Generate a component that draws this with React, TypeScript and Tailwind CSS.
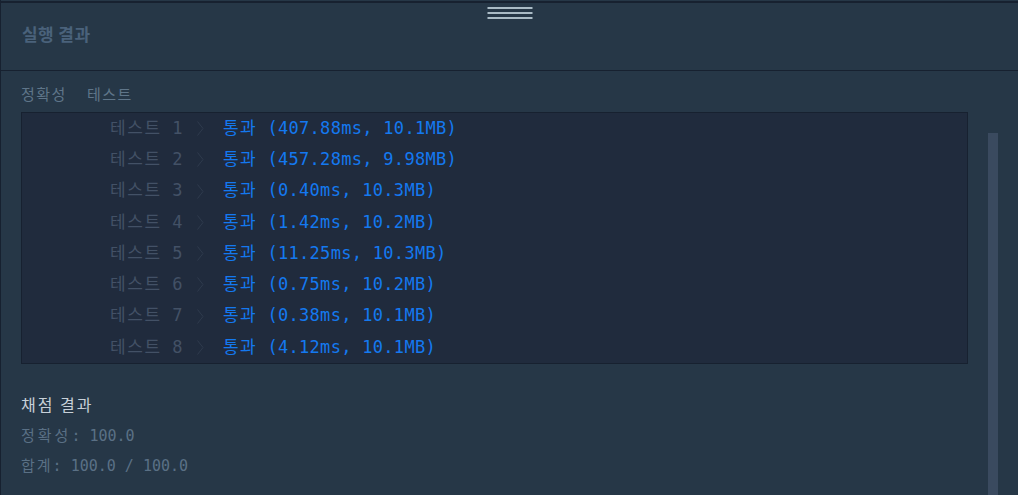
import React from "react"

const tests = [
  { n: 1, r: "(407.88ms, 10.1MB)" },
  { n: 2, r: "(457.28ms, 9.98MB)" },
  { n: 3, r: "(0.40ms, 10.3MB)" },
  { n: 4, r: "(1.42ms, 10.2MB)" },
  { n: 5, r: "(11.25ms, 10.3MB)" },
  { n: 6, r: "(0.75ms, 10.2MB)" },
  { n: 7, r: "(0.38ms, 10.1MB)" },
  { n: 8, r: "(4.12ms, 10.1MB)" },
]

const mono = "font-['DejaVu_Sans_Mono','Noto_Sans_CJK_KR',monospace]"
const sans = "font-['Noto_Sans_CJK_KR',sans-serif]"

export default function App() {
  return (
    <div className="flex h-[495px] w-[1018px] flex-col overflow-hidden border-l border-[#172130] bg-[#263747]">
      {/* top edge + grip */}
      <div className="h-px" />
      <div className="h-[2px] bg-[#172130]" />
      <div className="relative flex h-[67px] items-center px-[21px] pb-[5px]">
        <div className="absolute left-1/2 top-[4px] flex -translate-x-1/2 flex-col gap-[3px]">
          <div className="h-[2px] w-[45px] bg-[#aabbc6]" />
          <div className="h-[2px] w-[45px] bg-[#aabbc6]" />
          <div className="h-[2px] w-[45px] bg-[#aabbc6]" />
        </div>
        <h2 className={`${sans} text-[17px] font-bold tracking-[0.4px] text-[#4a627b]`}>실행 결과</h2>
      </div>
      <div className="h-px bg-[#172130]" />

      {/* Output */}
      <div className="flex flex-1">
        <div className="flex w-[967px] shrink-0 flex-col pl-[20px]">
          <div className={`mt-[12px] flex gap-[20px] ${sans} text-[15px] leading-[22px] tracking-[1.5px] text-[#5f7589]`}>
            <span>정확성</span>
            <span>테스트</span>
          </div>
          <div className={`mt-[7px] border border-[#172130] bg-[#202b3d] ${mono} text-[17px] tracking-[0.3px]`}>
            {tests.map((t) => (
              <div key={t.n} className="flex h-[31.25px] items-center pl-[88px]">
                <span className="w-[87px] whitespace-pre text-[#435166]">
                  <span className="tracking-[1.6px]">테스트</span> {t.n}
                </span>
                <svg width="7" height="15" viewBox="0 0 7 15" className="shrink-0">
                  <polyline points="0.5,0.5 6,7.5 0.5,14.5" fill="none" stroke="#2f3b4d" strokeWidth="1" />
                </svg>
                <span className="ml-[19px] whitespace-pre text-[#1479f0]">
                  <span className="tracking-[1.3px]">통과</span> {t.r}
                </span>
              </div>
            ))}
          </div>

          <div className={`mt-[28px] ${sans} text-[16px] leading-[24px] tracking-[2px] text-[#c7d0d8]`}>채점 결과</div>
          <div className={`mt-[5px] ${mono} text-[15px] leading-[30px] text-[#5a7085]`}>
            <div>
              <span className="tracking-[3px]">정확성</span>: 100.0
            </div>
            <div>
              <span className="tracking-[2px]">합계</span>: 100.0 / 100.0
            </div>
          </div>
        </div>
        <div className="ml-[20px] mt-[62px] w-[10px] bg-[#3a4a5f]" />
      </div>
    </div>
  )
}
